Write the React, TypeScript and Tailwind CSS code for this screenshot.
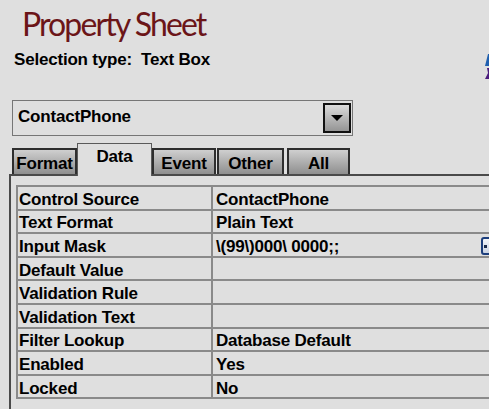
import React from "react";

const ROWS: [string, string][] = [
  ["Control Source", "ContactPhone"],
  ["Text Format", "Plain Text"],
  ["Input Mask", "\\(99\\)000\\ 0000;;"],
  ["Default Value", ""],
  ["Validation Rule", ""],
  ["Validation Text", ""],
  ["Filter Lookup", "Database Default"],
  ["Enabled", "Yes"],
  ["Locked", "No"],
];

const TABS = [
  { label: "Format", w: "w-[65px]", active: false, ml: "" },
  { label: "Data", w: "w-[75px]", active: true, ml: "" },
  { label: "Event", w: "w-[64px]", active: false, ml: "" },
  { label: "Other", w: "w-[67px]", active: false, ml: "ml-[1px]" },
  { label: "All", w: "w-[63px]", active: false, ml: "ml-[3px]" },
];

const font = "font-['Liberation_Sans',Arial,sans-serif] font-bold text-[17px] tracking-[-0.2px] text-black";

function SortGlyph() {
  return (
    <svg width="4" height="25" viewBox="0 0 4 25" className="mt-[4px] shrink-0">
      <polygon points="3,0 4,0 4,12 0,12" fill="#1f5fae" />
      <polygon points="2,14 4,14 4,25 0,25 3,19" fill="#4b1d7e" />
    </svg>
  );
}

function BuilderButton() {
  return (
    <div className="ml-auto flex h-[18px] w-[17px] shrink-0 items-center rounded-[3px] border-2 border-[#1c3e7c] bg-gradient-to-b from-[#f4f6fa] to-[#c9d2e2] pl-[1px]">
      <span className="h-[3px] w-[3px] bg-[#1c2c4c]" />
    </div>
  );
}

export default function App() {
  return (
    <div className={`h-[409px] w-[489px] overflow-hidden bg-[#dfdfdf] ${font}`}>
      <div className="ml-[22px] mt-[7px] font-['Lato',sans-serif] text-[32px] font-normal leading-[33px] tracking-[-1.9px] text-[#6b1518]">
        Property Sheet
      </div>

      <div className="mt-[10px] flex h-[20px] items-start justify-between pl-[14px]">
        <div className="whitespace-pre leading-[20px]">Selection type:  Text Box</div>
        <SortGlyph />
      </div>

      <div className="ml-[12px] mt-[30px] flex h-[36px] w-[341px] items-center border border-[#767676] pl-[5px] pr-[1px]">
        <span className="pb-[3px] leading-[19px]">ContactPhone</span>
        <div className="ml-auto flex h-[30px] w-[28px] items-center justify-center border-2 border-[#111] bg-gradient-to-b from-[#dcdcdc] to-[#959595]">
          <svg width="12" height="6" viewBox="0 0 12 6">
            <polygon points="0,0 12,0 6,6" fill="#000" />
          </svg>
        </div>
      </div>

      <div className="relative z-10 ml-[12px] mt-[7px] flex h-[33px] items-end">
        {TABS.map((t) =>
          t.active ? (
            <div
              key={t.label}
              className={`${t.w} ${t.ml} flex h-[33px] justify-center border-x border-t border-[#5a5a5a] bg-[#dfdfdf] pt-[3px] leading-[19px]`}
            >
              {t.label}
            </div>
          ) : (
            <div
              key={t.label}
              className={`${t.w} ${t.ml} mb-[2px] flex h-[26px] items-center justify-center border-2 border-b-0 border-[#2e2e2e] bg-gradient-to-b from-[#cfcfcf] to-[#8f8f8f] pt-[3px] leading-[19px]`}
            >
              {t.label}
            </div>
          )
        )}
      </div>

      <div className="-mt-[2px] ml-[9px] h-[260px] border-l-2 border-t-2 border-[#4a4a4a] pl-[5px] pt-[9px]">
        <div className="w-[520px] border-l-2 border-t-2 border-[#8a8a8a]">
          {ROWS.map(([k, v]) => (
            <div key={k} className="flex h-[23.6px] border-b-2 border-[#8a8a8a] leading-[19px]">
              <div className="flex w-[195px] shrink-0 items-center border-r-2 border-[#8a8a8a] pl-[1px] pt-[3px]">{k}</div>
              <div className="flex w-[285px] items-center whitespace-pre pl-[3px] pt-[3px]">
                {v}
                {k === "Input Mask" && <BuilderButton />}
              </div>
            </div>
          ))}
        </div>
      </div>
    </div>
  );
}
